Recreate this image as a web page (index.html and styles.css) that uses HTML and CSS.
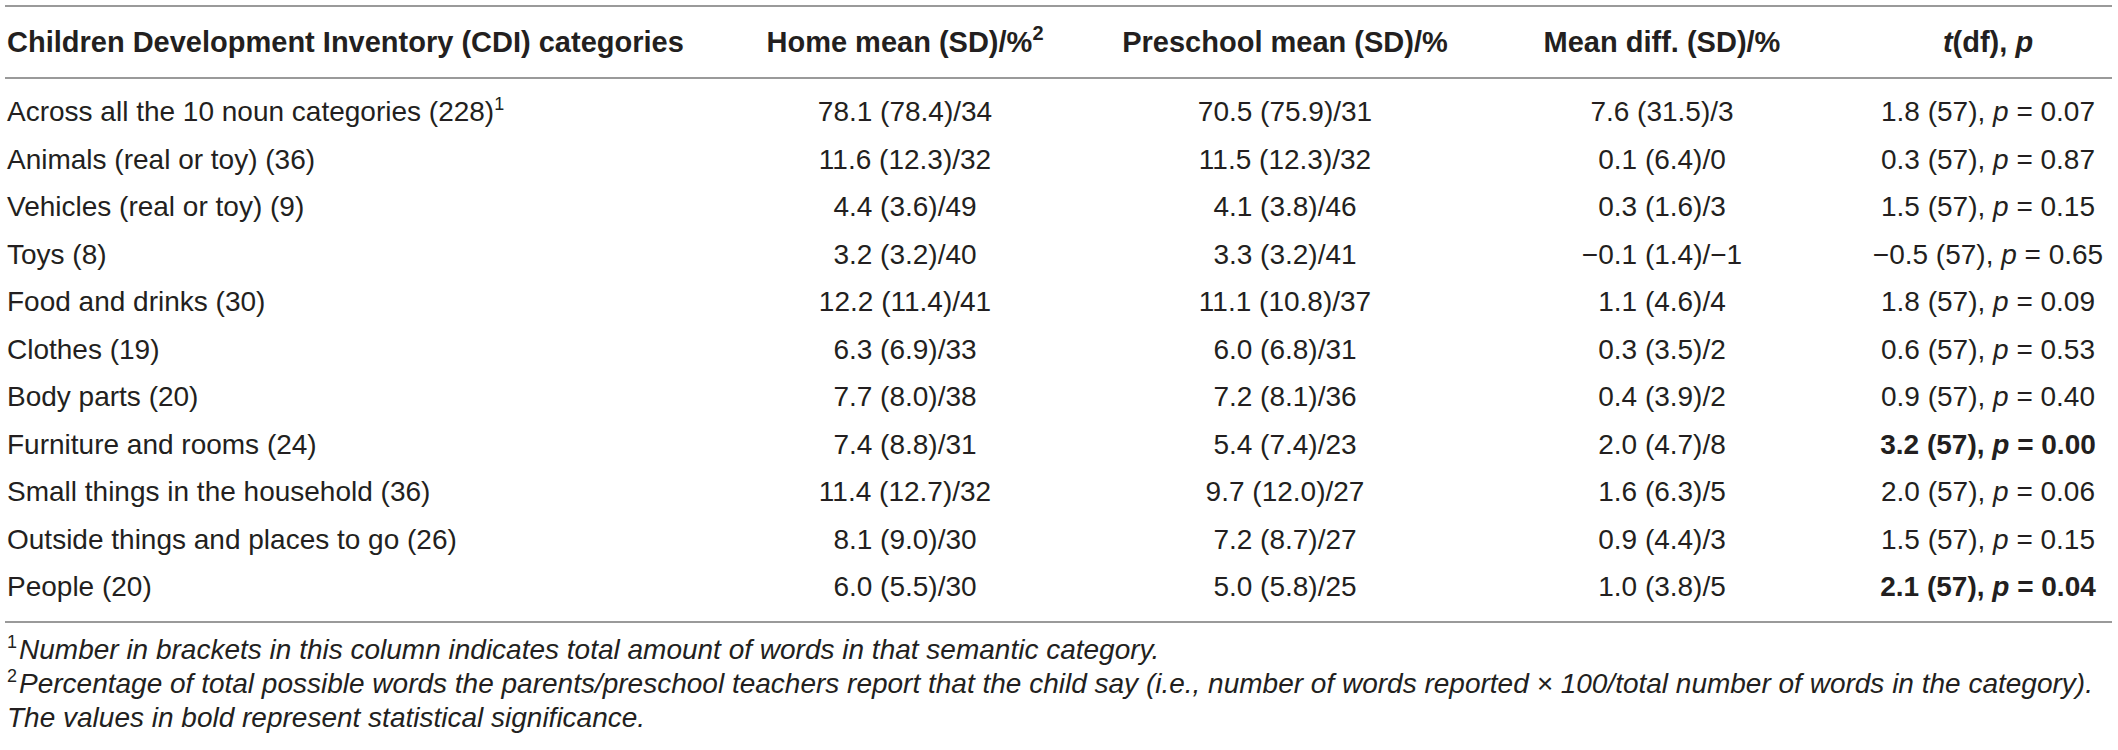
FILE: index.html
```html
<!DOCTYPE html>
<html lang="en">
<head>
  <meta charset="UTF-8">
  <title>CDI noun categories – home vs preschool</title>
  <link rel="stylesheet" href="styles.css">
</head>
<body>
  <div class="table-wrap">
    <table class="cdi-table">
      <colgroup>
        <col class="col-cat">
        <col class="col-home">
        <col class="col-pre">
        <col class="col-diff">
        <col class="col-t">
      </colgroup>
      <thead>
        <tr>
          <th>Children Development Inventory (CDI) categories</th>
          <th>Home mean (SD)/%<sup>2</sup></th>
          <th>Preschool mean (SD)/%</th>
          <th>Mean diff. (SD)/%</th>
          <th><i>t</i>(df), <i>p</i></th>
        </tr>
      </thead>
      <tbody>
        <tr>
          <td>Across all the 10 noun categories (228)<sup>1</sup></td>
          <td>78.1 (78.4)/34</td>
          <td>70.5 (75.9)/31</td>
          <td>7.6 (31.5)/3</td>
          <td>1.8 (57), <i>p</i> = 0.07</td>
        </tr>
        <tr>
          <td>Animals (real or toy) (36)</td>
          <td>11.6 (12.3)/32</td>
          <td>11.5 (12.3)/32</td>
          <td>0.1 (6.4)/0</td>
          <td>0.3 (57), <i>p</i> = 0.87</td>
        </tr>
        <tr>
          <td>Vehicles (real or toy) (9)</td>
          <td>4.4 (3.6)/49</td>
          <td>4.1 (3.8)/46</td>
          <td>0.3 (1.6)/3</td>
          <td>1.5 (57), <i>p</i> = 0.15</td>
        </tr>
        <tr>
          <td>Toys (8)</td>
          <td>3.2 (3.2)/40</td>
          <td>3.3 (3.2)/41</td>
          <td>&minus;0.1 (1.4)/&minus;1</td>
          <td>&minus;0.5 (57), <i>p</i> = 0.65</td>
        </tr>
        <tr>
          <td>Food and drinks (30)</td>
          <td>12.2 (11.4)/41</td>
          <td>11.1 (10.8)/37</td>
          <td>1.1 (4.6)/4</td>
          <td>1.8 (57), <i>p</i> = 0.09</td>
        </tr>
        <tr>
          <td>Clothes (19)</td>
          <td>6.3 (6.9)/33</td>
          <td>6.0 (6.8)/31</td>
          <td>0.3 (3.5)/2</td>
          <td>0.6 (57), <i>p</i> = 0.53</td>
        </tr>
        <tr>
          <td>Body parts (20)</td>
          <td>7.7 (8.0)/38</td>
          <td>7.2 (8.1)/36</td>
          <td>0.4 (3.9)/2</td>
          <td>0.9 (57), <i>p</i> = 0.40</td>
        </tr>
        <tr>
          <td>Furniture and rooms (24)</td>
          <td>7.4 (8.8)/31</td>
          <td>5.4 (7.4)/23</td>
          <td>2.0 (4.7)/8</td>
          <td class="sig">3.2 (57), <i>p</i> = 0.00</td>
        </tr>
        <tr>
          <td>Small things in the household (36)</td>
          <td>11.4 (12.7)/32</td>
          <td>9.7 (12.0)/27</td>
          <td>1.6 (6.3)/5</td>
          <td>2.0 (57), <i>p</i> = 0.06</td>
        </tr>
        <tr>
          <td>Outside things and places to go (26)</td>
          <td>8.1 (9.0)/30</td>
          <td>7.2 (8.7)/27</td>
          <td>0.9 (4.4)/3</td>
          <td>1.5 (57), <i>p</i> = 0.15</td>
        </tr>
        <tr>
          <td>People (20)</td>
          <td>6.0 (5.5)/30</td>
          <td>5.0 (5.8)/25</td>
          <td>1.0 (3.8)/5</td>
          <td class="sig">2.1 (57), <i>p</i> = 0.04</td>
        </tr>
      </tbody>
    </table>

    <div class="notes">
      <p><sup>1</sup><i>Number in brackets in this column indicates total amount of words in that semantic category.</i></p>
      <p><sup>2</sup><i>Percentage of total possible words the parents/preschool teachers report that the child say (i.e., number of words reported &times; 100/total number of words in the category).</i></p>
      <p><i>The values in bold represent statistical significance.</i></p>
    </div>
  </div>
</body>
</html>
```

FILE: styles.css
```css
:root {
  --color-text: #231f20;
  --color-rule: #9a9a9a;
  --font-family: "Liberation Sans", Arial, Helvetica, sans-serif;
}
* { box-sizing: border-box; margin: 0; padding: 0; }
html, body { background: #fff; }
body { font-family: var(--font-family); color: var(--color-text); }

.table-wrap { padding: 5px 6px 0 5px; }

/* Table */
.cdi-table {
  width: 2107px;
  border-collapse: collapse;
  table-layout: fixed;
  font-size: 28px;
}
.col-cat { width: 695px; }
.col-home { width: 410px; }
.col-pre { width: 350px; }
.col-diff { width: 404px; }
.col-t { width: 248px; }

.cdi-table th {
  font-size: 29px;
  font-weight: bold;
  line-height: 70px;
  text-align: center;
  white-space: nowrap;
  border-top: 2px solid var(--color-rule);
  border-bottom: 2px solid var(--color-rule);
}
.cdi-table td {
  line-height: 47.5px;
  text-align: center;
  white-space: nowrap;
}
.cdi-table th:first-child,
.cdi-table td:first-child { text-align: left; padding-left: 2px; }

.cdi-table tbody tr:first-child td { padding-top: 9px; }
.cdi-table tbody tr:last-child td {
  padding-bottom: 10px;
  border-bottom: 2px solid var(--color-rule);
}
.cdi-table td.sig { font-weight: bold; }

sup {
  font-size: 18px;
  line-height: 0;
  vertical-align: 11px;
}
th sup { font-size: 20px; vertical-align: 12px; }

/* Footnotes */
.notes { padding: 10px 0 0 2px; font-size: 28px; line-height: 34px; }
.notes p { white-space: nowrap; }
.notes sup { font-style: normal; margin-right: 2px; }
```
